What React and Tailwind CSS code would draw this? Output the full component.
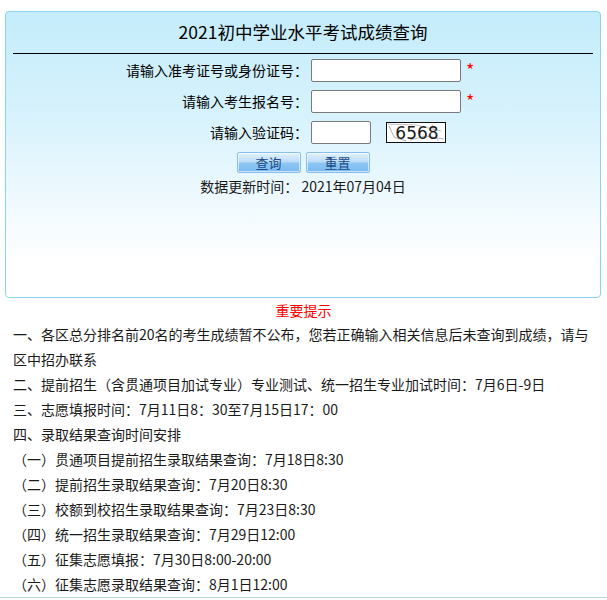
import React from "react";

const font = { fontFamily: '"Noto Sans CJK SC", "Noto Sans", sans-serif' };

function Captcha() {
  return (
    <svg width="60" height="21" viewBox="0 0 60 21" className="block">
      <rect x="0.5" y="0.5" width="59" height="20" fill="#fff" stroke="#111" />
      <path d="M3 4 L8 15 L20 19" stroke="#9a9a9a" strokeWidth="0.8" fill="none" />
      <path d="M2 2 L30 3 L55 9" stroke="#b0b0b0" strokeWidth="0.8" fill="none" />
      <path d="M24 18 L40 14 L58 17" stroke="#a0a0a0" strokeWidth="0.8" fill="none" />
      <path d="M46 2 L52 19" stroke="#b5b5b5" strokeWidth="0.7" fill="none" />
      <text
        x="31"
        y="17"
        textAnchor="middle"
        fontSize="17"
        fill="#1a1a1a"
        style={{ fontFamily: '"DejaVu Sans", sans-serif' }}
      >
        6568
      </text>
    </svg>
  );
}

function Btn({ children }) {
  return (
    <button className="w-[64px] h-[21px] rounded-[2px] border border-[#86c0ea] bg-[linear-gradient(to_bottom,#e4f2fc_0%,#bcdcf6_45%,#8cc6f3_55%,#7ab9f0_100%)] text-[13px] leading-[19px] text-[#1d4a85] shadow-[inset_0_0_0_1px_rgba(255,255,255,0.6)]">
      {children}
    </button>
  );
}

export default function App() {
  const lines = [
    "一、各区总分排名前20名的考生成绩暂不公布，您若正确输入相关信息后未查询到成绩，请与区中招办联系",
    "二、提前招生（含贯通项目加试专业）专业测试、统一招生专业加试时间：7月6日-9日",
    "三、志愿填报时间：7月11日8：30至7月15日17：00",
    "四、录取结果查询时间安排",
    "（一）贯通项目提前招生录取结果查询：7月18日8:30",
    "（二）提前招生录取结果查询：7月20日8:30",
    "（三）校额到校招生录取结果查询：7月23日8:30",
    "（四）统一招生录取结果查询：7月29日12:00",
    "（五）征集志愿填报：7月30日8:00-20:00",
    "（六）征集志愿录取结果查询：8月1日12:00",
  ];
  return (
    <div className="w-[607px] h-[600px] overflow-hidden bg-white text-[#111]" style={font}>
      <div className="pt-[11px] pl-[5px]">
        <div className="w-[596px] h-[287px] border border-[#8ad5ec] rounded-[4px] bg-[linear-gradient(to_bottom,#c4ecfb_0%,#d6f2fc_35%,#eef9fe_65%,#ffffff_88%)]">
          <div className="mx-[7px] h-[42px] border-b border-black flex items-center justify-center text-[17.5px] text-black">
            2021初中学业水平考试成绩查询
          </div>
          <div className="mt-[5px] flex flex-col gap-[8px] text-[14px] text-black">
            <div className="flex items-center h-[23px]">
              <div className="w-[302px] text-right">请输入准考证号或身份证号：</div>
              <div className="ml-[3px] w-[150px] h-[23px] bg-white border border-[#7a7a7a] rounded-[2px]"></div>
              <span className="ml-[5px] text-[#ff0000] text-[18px] leading-none -mt-[4px]">*</span>
            </div>
            <div className="flex items-center h-[23px]">
              <div className="w-[302px] text-right">请输入考生报名号：</div>
              <div className="ml-[3px] w-[150px] h-[23px] bg-white border border-[#7a7a7a] rounded-[2px]"></div>
              <span className="ml-[5px] text-[#ff0000] text-[18px] leading-none -mt-[4px]">*</span>
            </div>
            <div className="flex items-center h-[23px]">
              <div className="w-[302px] text-right">请输入验证码：</div>
              <div className="ml-[3px] w-[60px] h-[23px] bg-white border border-[#7a7a7a] rounded-[2px]"></div>
              <div className="ml-[15px]">
                <Captcha />
              </div>
            </div>
          </div>
          <div className="mt-[8px] flex justify-center gap-[5px]">
            <Btn>查询</Btn>
            <Btn>重置</Btn>
          </div>
          <div className="mt-[3px] text-center text-[14px] leading-[20px] text-[#1a1a1a]">
            数据更新时间： 2021年07月04日
          </div>
        </div>
      </div>
      <div className="mt-[1px] text-center text-[14px] leading-[23px] text-[#ff0000]">重要提示</div>
      <div className="border-b border-[#b7dcd2]">
        <div className="ml-[13px] w-[582px] text-[14px] leading-[25px] text-[#1a1a1a]">
          {lines.map((l, i) => (
            <p key={i}>{l}</p>
          ))}
        </div>
      </div>
    </div>
  );
}
